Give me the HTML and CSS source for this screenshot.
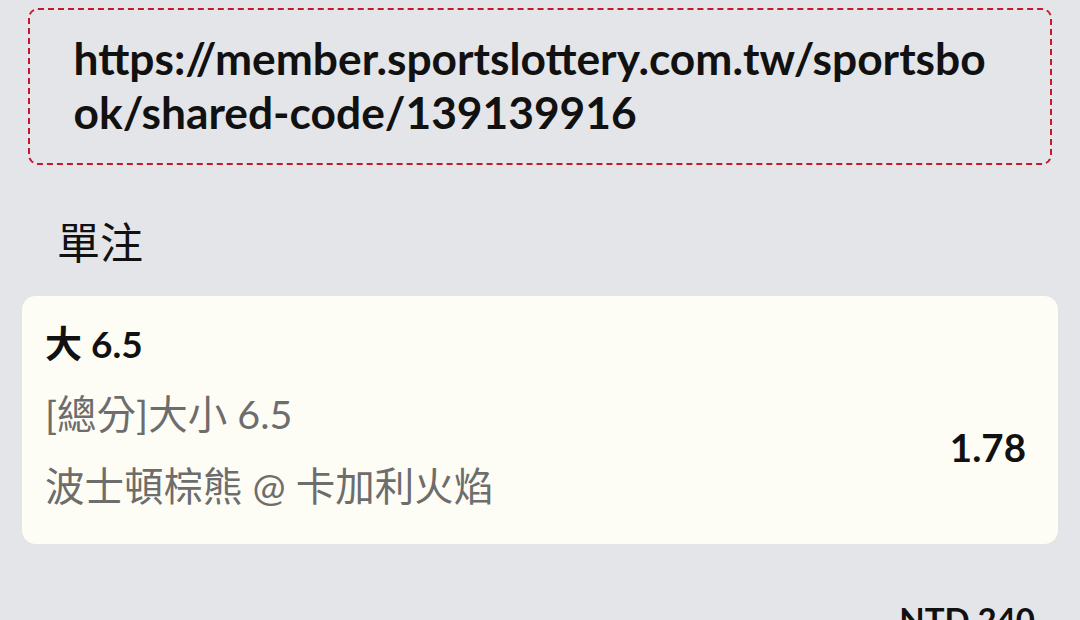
FILE: index.html
```html
<!DOCTYPE html>
<html lang="zh-Hant">
<head>
<meta charset="utf-8">
<link rel="stylesheet" href="styles.css">
</head>
<body>
<div class="page">
  <div class="code-box">
    <p class="code-url">https://member.sportslottery.com.tw/sportsbook/shared-code/139139916</p>
  </div>
  <h2 class="section-title">單注</h2>
  <div class="bet-card">
    <div class="bet-info">
      <div class="bet-pick">大 6.5</div>
      <div class="bet-market">[總分]大小 6.5</div>
      <div class="bet-event">波士頓棕熊 @ 卡加利火焰</div>
    </div>
    <div class="bet-odds">1.78</div>
  </div>
  <div class="summary-row">
    <div class="summary-label">投注金額</div>
    <div class="summary-value">NTD 240</div>
  </div>
</div>
</body>
</html>
```

FILE: styles.css
```css
* { box-sizing: border-box; }
html, body {
  margin: 0;
  padding: 0;
  background: #e4e5e8;
  font-family: "Lato", "Noto Sans CJK TC", sans-serif;
  color: #111;
}
.page {
  padding: 8px 22px 0 22px;
  display: flex;
  flex-direction: column;
}
.code-box {
  margin: 0 6px;
  height: 157px;
  border: 2.5px dashed #c41a2b;
  border-radius: 10px;
  padding: 20.5px 44px 0 43.5px;
}
.code-url {
  margin: 0;
  font-size: 44.3px;
  font-weight: 700;
  line-height: 54px;
  word-break: break-all;
}
.section-title {
  margin: 48px 0 0 35px;
  font-size: 43px;
  font-weight: 400;
  line-height: 60px;
  height: 83px;
}
.bet-card {
  background: #fefdf5;
  border-radius: 14px;
  height: 248px;
  display: flex;
  align-items: flex-start;
  padding: 25px 32px 0 23px;
}
.bet-info {
  flex: 1;
  display: flex;
  flex-direction: column;
}
.bet-pick {
  font-size: 37px;
  font-weight: 700;
  line-height: 46px;
  margin-bottom: 24px;
}
.bet-market, .bet-event {
  font-size: 39.5px;
  color: #6d6d6d;
  line-height: 46px;
}
.bet-market { margin-bottom: 26px; }
.bet-odds {
  align-self: center;
  margin-top: 28px;
  font-size: 38.5px;
  font-weight: 700;
}
.summary-row {
  display: flex;
  justify-content: space-between;
  align-items: flex-start;
  margin-top: 52px;
  padding: 0 23px;
}
.summary-label {
  margin-top: 19px;
  font-size: 36px;
  font-weight: 700;
  line-height: 46px;
}
.summary-value {
  font-size: 33px;
  font-weight: 700;
  line-height: 46px;
}
```
